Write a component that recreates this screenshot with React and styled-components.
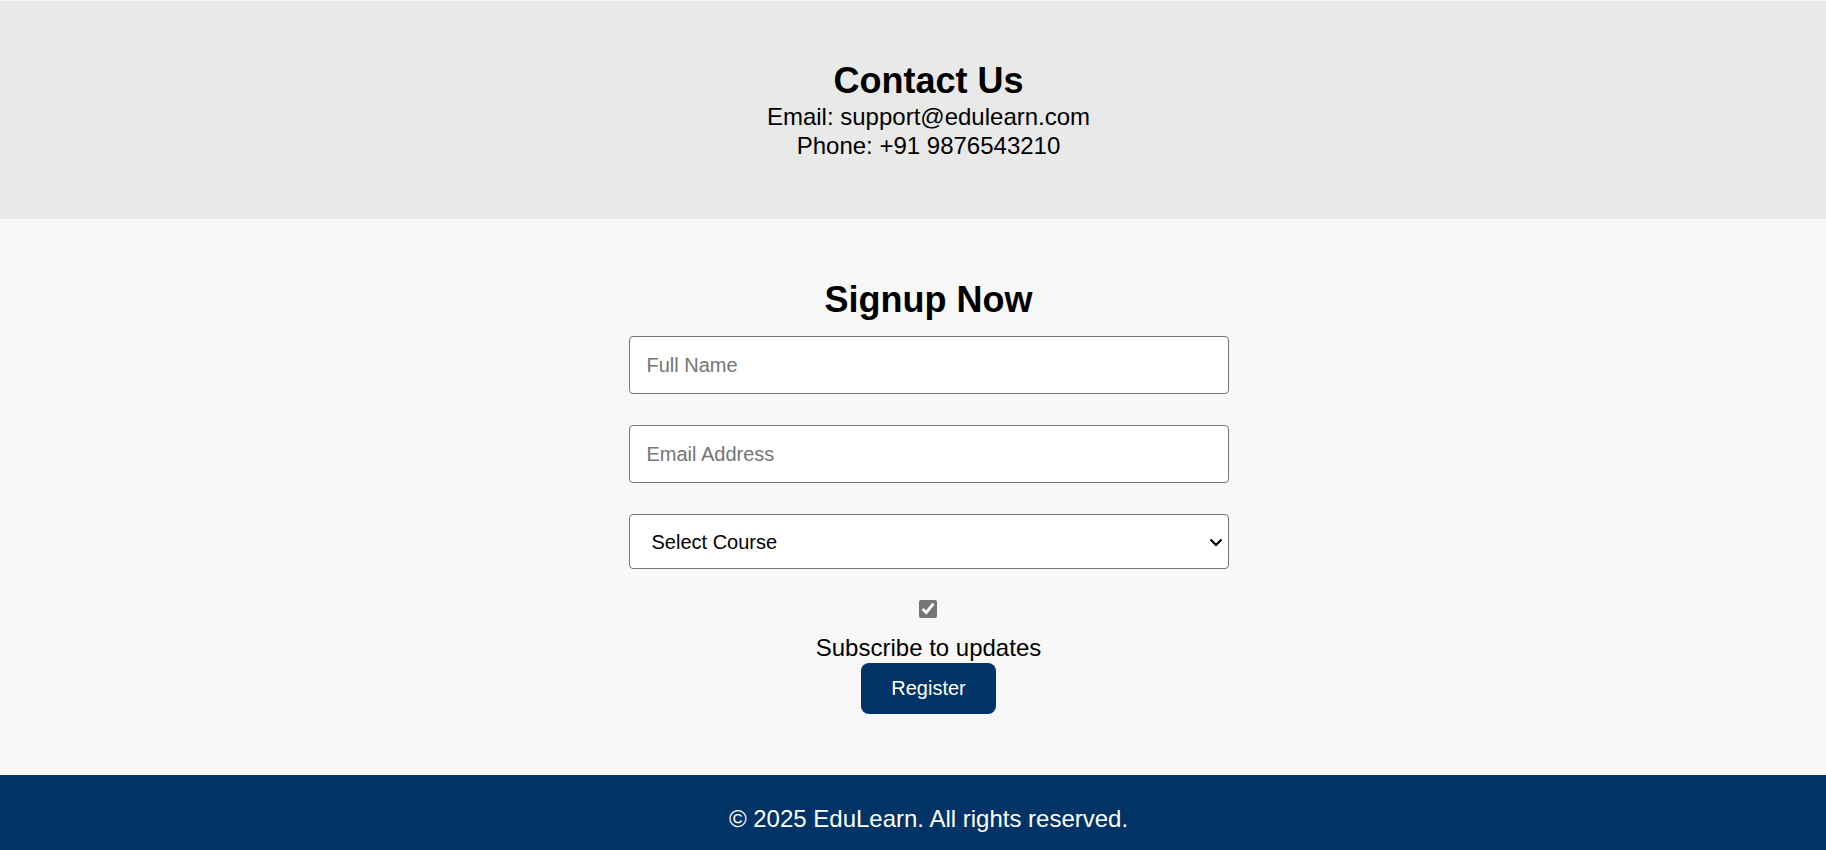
import styled, { createGlobalStyle } from 'styled-components';

const GlobalStyle = createGlobalStyle`
    body {
        margin: 0;
        font-family: "Liberation Sans", Arial, sans-serif;
        color: #000;
        background-color: #f8f8f8;
    }
`;

const ContactSection = styled.section`
    background-color: #e9e9e9;
    border-top: 1px solid #f8f8f8;
    padding: 59px 0 58px 31px;
    text-align: center;
`;

const Title = styled.h2`
    margin: 0;
    font-size: 36px;
    line-height: 41.4px;
    font-weight: 700;
`;

const ContactList = styled.div`
    padding-top: 2px;
`;

const ContactLine = styled.p`
    margin: 0;
    font-size: 24px;
    line-height: 28.8px;
`;

const SignupSection = styled.section`
    background-color: #f8f8f8;
    padding: 60px 0 61px 31px;
    text-align: center;
`;

const Form = styled.form`
    display: flex;
    flex-direction: column;
    align-items: center;
    width: 600px;
    margin: 0 auto;
    padding-top: 15.6px;
`;

const TextInput = styled.input`
    box-sizing: border-box;
    width: 600px;
    height: 58px;
    margin-bottom: 31px;
    padding: 0 17px;
    border: 1px solid #767676;
    border-radius: 4px;
    background-color: #fff;
    font-family: inherit;
    font-size: 20px;
    color: #000;

    &::placeholder {
        color: #757575;
    }
`;

const SelectWrap = styled.div`
    position: relative;
    width: 600px;
    height: 55px;
    margin-bottom: 31px;

    & svg {
        position: absolute;
        right: 6px;
        top: 24px;
        pointer-events: none;
    }
`;

const CourseSelect = styled.select`
    appearance: none;
    box-sizing: border-box;
    width: 100%;
    height: 100%;
    padding: 0 30px 0 22px;
    border: 1px solid #767676;
    border-radius: 4px;
    background-color: #fff;
    font-family: inherit;
    font-size: 20px;
    color: #000;
`;

const SubscribeLabel = styled.label`
    display: flex;
    flex-direction: column;
    align-items: center;
    font-size: 24px;
    line-height: 27.6px;

    & input {
        width: 18px;
        height: 18px;
        margin: 0 0 15.7px;
        accent-color: #767676;
    }
`;

const RegisterButton = styled.button`
    margin-top: 1.3px;
    height: 51px;
    padding: 0 30px;
    border: none;
    border-radius: 8px;
    background-color: #003366;
    color: #fff;
    font-family: inherit;
    font-size: 20px;
    cursor: pointer;
`;

const Footer = styled.footer`
    background-color: #003366;
    color: #fff;
    padding: 30px 0 30px 31px;
    text-align: center;

    & p {
        margin: 0;
        font-size: 24px;
        line-height: 27.6px;
    }
`;

function App() {
    return (
        <>
            <GlobalStyle />
            <ContactSection>
                <Title>Contact Us</Title>
                <ContactList>
                    <ContactLine>Email: support@edulearn.com</ContactLine>
                    <ContactLine>Phone: +91 9876543210</ContactLine>
                </ContactList>
            </ContactSection>

            <SignupSection>
                <Title>Signup Now</Title>
                <Form onSubmit={e => e.preventDefault()}>
                    <TextInput type="text" placeholder="Full Name" />
                    <TextInput type="email" placeholder="Email Address" />
                    <SelectWrap>
                        <CourseSelect defaultValue="">
                            <option value="">Select Course</option>
                            <option value="web">Web Development</option>
                            <option value="data">Data Science</option>
                        </CourseSelect>
                        <svg width="14" height="9" viewBox="0 0 14 9">
                            <polyline points="1.5,1.5 7,7 12.5,1.5" fill="none" stroke="#000" strokeWidth="2.2" />
                        </svg>
                    </SelectWrap>
                    <SubscribeLabel>
                        <input type="checkbox" defaultChecked />
                        Subscribe to updates
                    </SubscribeLabel>
                    <RegisterButton type="submit">Register</RegisterButton>
                </Form>
            </SignupSection>

            <Footer>
                <p>© 2025 EduLearn. All rights reserved.</p>
            </Footer>
        </>
    );
}

export default App;
